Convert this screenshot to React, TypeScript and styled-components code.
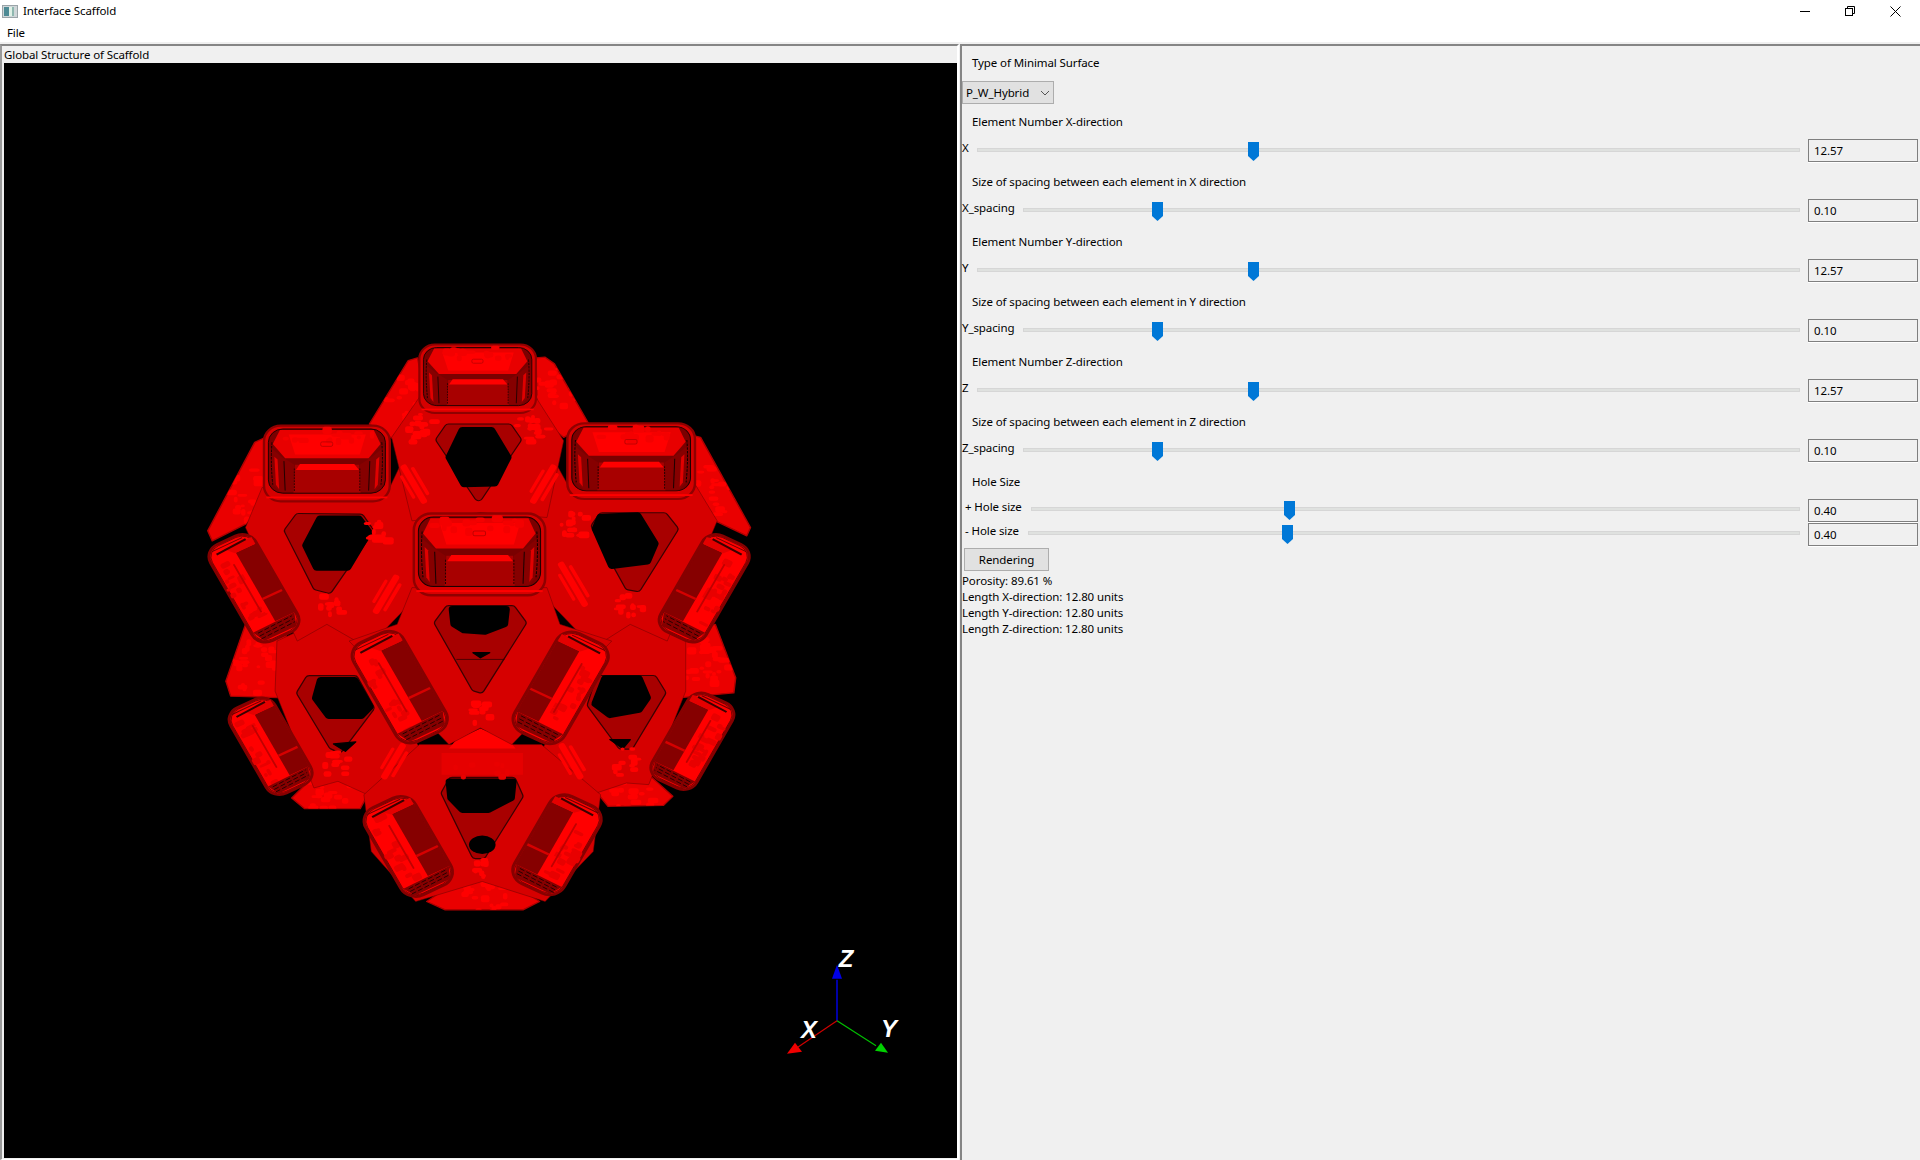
import React from "react";
import styled, { createGlobalStyle } from "styled-components";

const Global = createGlobalStyle`
  html, body { margin: 0; padding: 0; background: #f0f0f0; overflow: hidden; }
  #root { width: 1920px; height: 1160px; }
`;
const FONT = `"Noto Sans", "Open Sans", "Liberation Sans", sans-serif`;

const Window = styled.div`
  width: 1920px; height: 1160px; display: flex; flex-direction: column;
  font-family: ${FONT}; font-size: 11.5px; letter-spacing: -0.1px; color: #000; background: #f0f0f0;
`;
const TitleBar = styled.header`
  height: 22px; background: #fff; display: flex; align-items: center; padding-left: 2px; gap: 5px;
`;
const Caption = styled.span`line-height: 24px; flex: 1;`;
const Controls = styled.div`display: flex; align-items: center; height: 22px; padding-right: 19px; gap: 35px;`;
const MenuBar = styled.nav`height: 20px; background: #fff; display: flex; align-items: center; padding-left: 7px;`;
const Panels = styled.main`flex: 1; display: flex; padding-top: 2px; gap: 1px; min-height: 0;`;
const ScenePanel = styled.section`
  width: 959px; display: flex; flex-direction: column; padding: 0 0 1px 0;
  border-top: 2px solid #858585; border-left: 2px solid #9a9a9a; border-right: 2px solid #fff; border-bottom: 1px solid #fff;
  box-sizing: border-box;
`;
const SceneCaption = styled.div`height: 17px; line-height: 17px; padding-left: 2px; flex: none;`;
const Viewport = styled.div`flex: 1; margin-left: 2px; background: #000; min-height: 0; display: flex;`;
const SceneSvg = styled.svg`width: 100%; height: 100%; display: block;`;
const ControlPanel = styled.section`
  flex: 1; border-top: 2px solid #858585; border-left: 2px solid #858585; padding: 7px 2px 0 0;
  display: flex; flex-direction: column; box-sizing: border-box; min-width: 0;
`;
const Heading = styled.div`height: 20px; line-height: 20px; padding-left: 10px;`;
const Select = styled.div`
  margin-top: 8px; margin-bottom: 8px; width: 92px; height: 23px; box-sizing: border-box; background: #e1e1e1;
  border: 1px solid #adadad; display: flex; align-items: center; justify-content: space-between; padding: 0 3px 0 3px;
`;
const SliderGroup = styled.div`margin-top: 7px; margin-bottom: 10px;`;
const SliderRow = styled.div<{ $indent?: number; $tight?: boolean }>`
  display: flex; align-items: center; height: ${p => (p.$tight ? 24 : 23)}px; padding-left: ${p => p.$indent ?? 0}px;
`;
const SliderLabel = styled.label<{ $width: number }>`
  width: ${p => p.$width}px; flex: none; line-height: 16px; padding-bottom: 6px; white-space: nowrap;
`;
const Track = styled.div`
  flex: 1; height: 4px; background: #dfe1df; border: 1px solid #d6d6d6; box-sizing: border-box;
  position: relative; margin: 0 8px 2px 0;
`;
const Thumb = styled.svg`position: absolute; top: -7px; width: 11px; height: 19px; display: block;`;
const ValueBox = styled.div`
  width: 110px; height: 23px; flex: none; box-sizing: border-box; border: 1px solid #7f7f7f;
  box-shadow: 0 1px 0 #fff; line-height: 21px; padding-left: 5px; background: #f0f0f0;
`;
const HoleGroup = styled.div`margin-top: 6px; display: flex; flex-direction: column;`;
const RenderButton = styled.button`
  margin: 2px 0 0 2px; width: 85px; height: 23px; box-sizing: border-box; background: #e1e1e1; border: 1px solid #adadad;
  font-family: ${FONT}; font-size: 11.5px; letter-spacing: -0.1px; color: #000; padding: 0;
`;
const InfoBlock = styled.div`margin-top: 2px; display: flex; flex-direction: column;`;
const InfoLine = styled.div`height: 16px; line-height: 16px;`;

type Pt = number[];
const pts = (a: Pt) => {
  const o: string[] = [];
  for (let i = 0; i < a.length; i += 2) o.push(a[i] + "," + a[i + 1]);
  return o.join(" ");
};
const centroid = (p: Pt) => {
  let cx = 0, cy = 0;
  for (let i = 0; i < p.length; i += 2) { cx += p[i]; cy += p[i + 1]; }
  return [cx / (p.length / 2), cy / (p.length / 2)];
};
const shrink = (p: Pt, k: number) => {
  const [cx, cy] = centroid(p);
  return p.map((v, i) => (i % 2 ? cy + (v - cy) * k : cx + (v - cx) * k));
};
const B = "#ff0000", M = "#d60000", DD = "#860000";

const Poly = ({ p, f, s, w }: { p: Pt; f: string; s?: string; w?: number }) => (
  <polygon points={pts(p)} fill={f} stroke={s ?? "none"} strokeWidth={w ?? 0} strokeLinejoin="round" />
);
const Body = ({ p }: { p: Pt }) => <Poly p={p} f={M} s="#700000" w={1.5} />;

function rng(seed: number) {
  let x = seed;
  return () => { x = (x * 16807) % 2147483647; return x / 2147483647; };
}

const Facets = ({ x, y, rx, ry, n, seed, fill = B }: { x: number; y: number; rx: number; ry: number; n: number; seed: number; fill?: string }) => {
  const r = rng(seed * 7919 + 13);
  const out = [];
  for (let i = 0; i < n; i++) {
    const a = r() * 6.28, d = Math.sqrt(r());
    out.push(<rect key={i} x={x + Math.cos(a) * d * rx - 10} y={y + Math.sin(a) * d * ry - 8} width={10 + r() * 20} height={8 + r() * 14} rx={6} fill={fill} />);
  }
  return <g>{out}</g>;
};

const Stripe = ({ x, y, l, w, a, f = B }: { x: number; y: number; l: number; w: number; a: number; f?: string }) => (
  <g transform={`translate(${x} ${y}) rotate(${a})`}>
    <rect x={-w / 2} y={-l / 2} width={w} height={l} rx={w / 2.4} fill={f} />
    <rect x={w * 0.8} y={-l * 0.36} width={w * 0.55} height={l * 0.72} rx={w / 4} fill={f} />
    <rect x={-w * 1.3} y={-l * 0.3} width={w * 0.5} height={l * 0.6} rx={w / 4} fill={f} />
  </g>
);

const Shoulder = ({ p, seed }: { p: Pt; seed: number }) => {
  const [cx, cy] = centroid(p);
  return (
    <g>
      <Poly p={p} f="#ea0000" s="#b00000" w={4} />
      <clipPath id={"sh" + seed}><polygon points={pts(p)} /></clipPath>
      <g clipPath={`url(#sh${seed})`}><Facets x={cx} y={cy} rx={65} ry={80} n={26} seed={seed} /></g>
    </g>
  );
};

const Capsule = ({ x, y, w, l, mirror, seed }: { x: number; y: number; w: number; l: number; mirror?: boolean; seed: number }) => {
  const hw = w / 2, hl = l / 2;
  return (
    <g transform={`translate(${x} ${y}) rotate(${mirror ? 27.5 : -27.5}) scale(${mirror ? -1 : 1} 1)`}>
      <rect x={-hw} y={-hl} width={w} height={l} rx={w * 0.3} fill={B} stroke={DD} strokeWidth={8} />
      <rect x={-hw + 5} y={-hl + 5} width={w - 10} height={l - 10} rx={w * 0.27} fill="none" stroke="#2a0000" strokeWidth={1.5} />
      <Facets x={-hw * 0.5} y={0} rx={hw * 0.38} ry={hl * 0.82} n={18} seed={seed} fill="#e80000" />
      <rect x={-w * 0.13} y={-hl * 0.55} width={5} height={l * 0.5} rx={2} fill="#c00000" />
      <rect x={-w * 0.05} y={-hl * 0.7} width={8} height={l * 0.6} rx={3} fill={B} />
      <rect x={w * 0.04} y={-hl * 0.72} width={w * 0.43} height={hl * 1.42} fill={DD} />
      <Poly p={[w * 0.02, -hl * 0.72, w * 0.47, -hl * 0.72, w * 0.47, -hl * 0.86, -w * 0.12, -hl * 0.86]} f="#e40000" />
      <rect x={-w * 0.26} y={-hl * 0.87} width={w * 0.66} height={6} fill="#3a0000" transform="rotate(-3)" />
      <rect x={-w * 0.36} y={-hl * 0.93} width={w * 0.66} height={3} fill="#6a0000" />
      <rect x={w * 0.04} y={hl * 0.22} width={w * 0.43} height={7} fill={M} />
      <Poly p={[-w * 0.46, hl * 0.72, w * 0.46, hl * 0.7, w * 0.36, hl * 0.94, -w * 0.34, hl * 0.94]} f={DD} />
      {[0.74, 0.8, 0.86].map((k, i) => (
        <line key={i} x1={-w * 0.38} y1={hl * k + 4} x2={w * 0.38} y2={hl * k} stroke="#1a0000" strokeWidth={2.2} strokeDasharray="14 6" />
      ))}
    </g>
  );
};

const Cup = ({ x, y, w, h, seed }: { x: number; y: number; w: number; h: number; seed: number }) => (
  <g transform={`translate(${x} ${y}) scale(${w / 315} ${h / 190})`}>
    <rect x={0} y={0} width={315} height={205} rx={42} fill={M} stroke="#8f0000" strokeWidth={6} />
    <rect x={6} y={192} width={303} height={5} fill={B} />
    <rect x={11} y={9} width={293} height={174} rx={36} fill="#7a0000" stroke="#1c0000" strokeWidth={2.5} />
    <Poly p={[40, 12, 275, 12, 292, 50, 262, 88, 53, 88, 22, 50]} f="#e80000" />
    <Poly p={[62, 24, 255, 24, 240, 78, 78, 78]} f={B} />
    <Facets x={157} y={28} rx={125} ry={18} n={16} seed={seed} fill="#f40000" />
    <rect x={142} y={44} width={30} height={12} rx={4} fill="none" stroke="#c00000" strokeWidth={2.5} />
    <Poly p={[14, 58, 44, 84, 76, 106, 76, 180, 40, 180, 14, 150]} f={DD} />
    <Poly p={[301, 58, 271, 84, 240, 106, 240, 180, 275, 180, 301, 150]} f={DD} />
    <Poly p={[26, 84, 34, 92, 38, 172, 30, 160]} f="#e00000" />
    <Poly p={[289, 84, 281, 92, 277, 172, 285, 160]} f="#e00000" />
    <path d="M20 45 Q16 100 22 160" fill="none" stroke="#100000" strokeWidth={2.5} strokeDasharray="7 3" />
    <path d="M295 45 Q299 100 293 160" fill="none" stroke="#100000" strokeWidth={2.5} strokeDasharray="7 3" />
    <line x1={50} y1={96} x2={53} y2={176} stroke="#1c0000" strokeWidth={2.5} />
    <line x1={265} y1={96} x2={262} y2={176} stroke="#1c0000" strokeWidth={2.5} />
    <Poly p={[78, 106, 238, 106, 242, 181, 74, 181]} f="#a80000" />
    <Poly p={[90, 104, 226, 104, 238, 120, 80, 120]} f={B} />
    <line x1={76} y1={116} x2={76} y2={180} stroke="#2a0000" strokeWidth={2.5} strokeDasharray="5 3" />
    <line x1={240} y1={116} x2={240} y2={180} stroke="#2a0000" strokeWidth={2.5} strokeDasharray="5 3" />
  </g>
);

const Hole = ({ outer, black, small }: { outer: Pt; black: Pt; small?: Pt }) => {
  const o = shrink(outer, 0.9);
  const b = shrink(black, 0.88);
  return (
    <g>
      <Poly p={o} f="#a00000" s="#3a0000" w={26} />
      <Poly p={o} f="#a80000" s="#a80000" w={19} />
      <Poly p={b} f="#000" s="#000" w={20} />
      {small && <Poly p={small} f="#000" s="#000" w={4} />}
    </g>
  );
};

const y7 = (a: Pt) => a.map((v, i) => (i % 2 ? v + 840 : v));

const Scaffold = () => (
  <g transform="translate(190 330) scale(0.36995 0.33333)">
    {/* back ribbons */}
    <Shoulder seed={1} p={[485, 280, 590, 90, 615, 82, 640, 220, 620, 270, 550, 325]} />
    <Shoulder seed={2} p={[935, 82, 960, 80, 985, 100, 1078, 280, 1010, 320, 940, 260]} />
    <Shoulder seed={3} p={[48, 600, 175, 335, 200, 322, 230, 470, 150, 580, 60, 630]} />
    <Shoulder seed={4} p={[1350, 312, 1380, 320, 1515, 590, 1505, 615, 1420, 570, 1365, 470]} />
    <Shoulder seed={5} p={y7([150, 40, 97, 210, 110, 255, 260, 260, 260, 60])} />
    <Shoulder seed={6} p={y7([1320, 60, 1420, 40, 1475, 200, 1470, 245, 1320, 260])} />
    <Shoulder seed={7} p={y7([275, 560, 310, 592, 460, 592, 490, 530, 410, 470, 330, 500])} />
    <Shoulder seed={8} p={y7([1090, 530, 1130, 585, 1280, 582, 1305, 555, 1240, 490, 1180, 480])} />
    <Shoulder seed={9} p={y7([640, 870, 690, 895, 900, 895, 945, 870, 860, 810, 790, 790, 720, 810])} />

    {/* far units */}
    <Body p={y7([235, 90, 370, 20, 450, 60, 625, 420, 490, 555, 400, 510, 335, 530, 230, 240])} />
    <Body p={y7([1110, 60, 1200, 20, 1340, 90, 1340, 240, 1240, 520, 1180, 515, 1085, 550, 950, 420])} />
    <Body p={y7([620, 400, 950, 400, 1110, 550, 1090, 720, 960, 870, 790, 810, 610, 870, 490, 720, 470, 550])} />
    <Poly p={y7([680, 425, 900, 425, 900, 490, 680, 490])} f="#e60000" />
    <Poly p={y7([720, 385, 785, 352, 860, 385, 880, 412, 700, 412])} f={B} />
    <Hole outer={y7([290, 240, 315, 195, 450, 195, 497, 290, 405, 425, 385, 415])} black={y7([345, 200, 450, 200, 497, 290, 470, 320, 370, 320, 330, 260])} small={y7([388, 398, 448, 392, 420, 420])} />
    <Hole outer={y7([1075, 280, 1100, 195, 1260, 195, 1285, 240, 1190, 415, 1165, 415])} black={y7([1085, 280, 1115, 195, 1220, 195, 1245, 260, 1220, 300, 1130, 318])} small={y7([1135, 385, 1190, 385, 1170, 412])} />
    <Hole outer={y7([680, 540, 700, 500, 880, 500, 900, 550, 790, 745, 770, 745])} black={y7([690, 506, 885, 506, 880, 560, 810, 600, 730, 600, 695, 560])} />
    <ellipse cx={790} cy={700 + 840} rx={36} ry={28} fill="#000" />
    <Stripe x={550} y={1290} l={120} w={18} a={28} />
    <Stripe x={1030} y={1290} l={120} w={18} a={-28} />
    <Facets x={400} y={1305} rx={34} ry={50} n={12} seed={31} />
    <Facets x={1180} y={1295} rx={34} ry={50} n={12} seed={32} />
    <Facets x={790} y={1320} rx={80} ry={30} n={8} seed={34} fill="#ea0000" />
    <Capsule x={218} y={1245} w={135} l={288} seed={41} />
    <Capsule x={1358} y={1230} w={135} l={288} mirror seed={42} />
    <Capsule x={590} y={1545} w={152} l={295} seed={43} />
    <Capsule x={992} y={1540} w={152} l={295} mirror seed={44} />
    <Facets x={790} y={1618} rx={22} ry={34} n={10} seed={45} />

    {/* near side units */}
    <Body p={[195, 470, 540, 470, 570, 400, 640, 560, 610, 800, 480, 950, 370, 880, 290, 930, 150, 590]} />
    <Body p={[1020, 460, 1365, 460, 1425, 570, 1290, 930, 1190, 880, 1090, 950, 960, 800, 930, 560, 990, 400]} />
    <Body p={[620, 200, 935, 200, 1010, 330, 965, 560, 785, 545, 600, 570, 545, 320]} />
    <Hole outer={[665, 325, 690, 285, 870, 285, 895, 325, 780, 515]} black={[730, 288, 820, 288, 870, 380, 830, 468, 735, 470, 690, 380]} />
    <Hole outer={[255, 595, 285, 550, 470, 552, 497, 595, 375, 790, 340, 780]} black={[345, 555, 465, 555, 495, 600, 430, 720, 335, 720, 302, 645]} />
    <Hole outer={[1085, 580, 1105, 548, 1290, 548, 1320, 590, 1210, 785, 1185, 780]} black={[1085, 590, 1100, 550, 1215, 545, 1268, 640, 1245, 700, 1135, 715]} />
    <Stripe x={605} y={460} l={130} w={18} a={-28} />
    <Stripe x={955} y={460} l={130} w={18} a={28} />
    <Stripe x={530} y={790} l={130} w={18} a={28} />
    <Stripe x={1035} y={760} l={150} w={18} a={-28} />
    <Facets x={630} y={300} rx={45} ry={45} n={16} seed={11} />
    <Facets x={925} y={300} rx={45} ry={45} n={16} seed={12} />
    <Facets x={510} y={590} rx={40} ry={45} n={14} seed={13} />
    <Facets x={1045} y={590} rx={40} ry={45} n={14} seed={14} />
    <Facets x={375} y={825} rx={40} ry={34} n={12} seed={15} />
    <Facets x={1190} y={825} rx={40} ry={34} n={12} seed={16} />
    <Capsule x={173} y={772} w={138} l={325} seed={21} />
    <Capsule x={1390} y={772} w={138} l={325} mirror seed={22} />
    <Cup x={620} y={42} w={315} h={190} seed={51} />
    <Cup x={200} y={285} w={340} h={210} seed={52} />
    <Cup x={1020} y={278} w={345} h={210} seed={53} />

    {/* central unit */}
    <Body p={[600, 770, 965, 770, 1000, 880, 1140, 930, 870, 1240, 785, 1190, 700, 1240, 430, 930, 560, 880]} />
    <Hole outer={y7([660, 30, 690, -15, 880, -15, 910, 30, 785, 250, 770, 245])} black={y7([700, -10, 865, -10, 860, 40, 800, 65, 735, 60, 705, 40])} small={y7([765, 125, 810, 125, 785, 140])} />
    <line x1={720} y1={985} x2={850} y2={985} stroke="#2a0000" strokeWidth={2} />
    <Facets x={785} y={1145} rx={30} ry={40} n={12} seed={17} />
    <Capsule x={567} y={1068} w={152} l={335} seed={23} />
    <Capsule x={1002} y={1070} w={152} l={335} mirror seed={24} />
    <Cup x={605} y={548} w={355} h={227} seed={54} />
  </g>
);

const AxisText = styled.text`
  font-family: "Liberation Sans", sans-serif; font-size: 24px; font-weight: 700; font-style: italic; fill: #fff; text-anchor: middle;
`;
const Axes = () => (
  <g>
    <line x1={837} y1={1019} x2={837} y2={978} stroke="#0000d0" strokeWidth={1.6} />
    <polygon points="837,963 832,977 842,977" fill="#0000e6" />
    <line x1={837} y1={1019} x2={797} y2={1046} stroke="#d00000" strokeWidth={1.2} />
    <polygon points="787,1052 795,1041 802,1050" fill="#f00000" />
    <line x1={837} y1={1019} x2={876} y2={1044} stroke="#00c000" strokeWidth={1.2} />
    <polygon points="888,1051 875,1049 881,1041" fill="#00d000" />
    <AxisText x={846} y={965}>Z</AxisText>
    <AxisText x={809} y={1036}>X</AxisText>
    <AxisText x={889} y={1035}>Y</AxisText>
  </g>
);

const SliderThumb = ({ pos }: { pos: number }) => (
  <Thumb viewBox="0 0 11 19" style={{ left: `${pos * 100}%` }}>
    <polygon points="0,0 11,0 11,14 5.5,19 0,14" fill="#0078d7" />
  </Thumb>
);

const AxisSliders = [
  { heading: "Element Number X-direction", label: "X", width: 15, value: "12.57", pos: 0.3293 },
  { heading: "Size of spacing between each element in X direction", label: "X_spacing", width: 61, value: "0.10", pos: 0.1647 },
  { heading: "Element Number Y-direction", label: "Y", width: 15, value: "12.57", pos: 0.3293 },
  { heading: "Size of spacing between each element in Y direction", label: "Y_spacing", width: 61, value: "0.10", pos: 0.1647 },
  { heading: "Element Number Z-direction", label: "Z", width: 15, value: "12.57", pos: 0.3293 },
  { heading: "Size of spacing between each element in Z direction", label: "Z_spacing", width: 61, value: "0.10", pos: 0.1647 },
];

export default function App() {
  return (
    <Window>
      <Global />
      <TitleBar>
        <svg width="16" height="13" viewBox="0 0 16 13">
          <rect x="0.5" y="0.5" width="15" height="12" fill="#cfd6d8" stroke="#9aa4a8" />
          <rect x="2" y="2" width="5" height="9" fill="#4d8a94" />
          <rect x="7" y="2" width="3" height="9" fill="#dff0e6" />
          <rect x="10" y="2" width="2" height="9" fill="#8fb8b0" />
        </svg>
        <Caption>Interface Scaffold</Caption>
        <Controls>
          <svg width="10" height="10" viewBox="0 0 10 10"><line x1="0" y1="5.5" x2="10" y2="5.5" stroke="#000" /></svg>
          <svg width="10" height="10" viewBox="0 0 10 10" fill="none" stroke="#000"><rect x="0.5" y="2.5" width="7" height="7" /><path d="M2.5 2.5V0.5H9.5V7.5H7.5" /></svg>
          <svg width="11" height="11" viewBox="0 0 11 11" stroke="#000"><path d="M0.5 0.5L10.5 10.5M10.5 0.5L0.5 10.5" /></svg>
        </Controls>
      </TitleBar>
      <MenuBar>File</MenuBar>
      <Panels>
        <ScenePanel>
          <SceneCaption>Global Structure of Scaffold</SceneCaption>
          <Viewport>
            <SceneSvg viewBox="4 63 953 1093" preserveAspectRatio="none">
              <Scaffold />
              <Axes />
            </SceneSvg>
          </Viewport>
        </ScenePanel>
        <ControlPanel>
          <Heading>Type of Minimal Surface</Heading>
          <Select>
            P_W_Hybrid
            <svg width="10" height="6" viewBox="0 0 10 6" fill="none" stroke="#555"><path d="M1 1L5 5L9 1" /></svg>
          </Select>
          {AxisSliders.map(s => (
            <React.Fragment key={s.label}>
              <Heading>{s.heading}</Heading>
              <SliderGroup>
                <SliderRow>
                  <SliderLabel $width={s.width}>{s.label}</SliderLabel>
                  <Track><SliderThumb pos={s.pos} /></Track>
                  <ValueBox>{s.value}</ValueBox>
                </SliderRow>
              </SliderGroup>
            </React.Fragment>
          ))}
          <Heading>Hole Size</Heading>
          <HoleGroup>
            <SliderRow $indent={3} $tight>
              <SliderLabel $width={66}>+ Hole size</SliderLabel>
              <Track><SliderThumb pos={0.329} /></Track>
              <ValueBox>0.40</ValueBox>
            </SliderRow>
            <SliderRow $indent={3} $tight>
              <SliderLabel $width={63}>- Hole size</SliderLabel>
              <Track><SliderThumb pos={0.329} /></Track>
              <ValueBox>0.40</ValueBox>
            </SliderRow>
          </HoleGroup>
          <RenderButton>Rendering</RenderButton>
          <InfoBlock>
            <InfoLine>Porosity: 89.61 %</InfoLine>
            <InfoLine>Length X-direction: 12.80 units</InfoLine>
            <InfoLine>Length Y-direction: 12.80 units</InfoLine>
            <InfoLine>Length Z-direction: 12.80 units</InfoLine>
          </InfoBlock>
        </ControlPanel>
      </Panels>
    </Window>
  );
}
